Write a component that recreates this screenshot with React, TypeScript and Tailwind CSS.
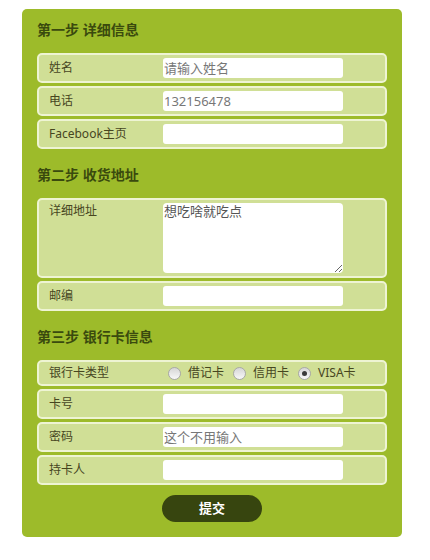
import React from 'react';

const font = { fontFamily: '"Noto Sans", "Noto Sans CJK SC", sans-serif' };

function Row({ label, children, top = false }: { label: string; children: React.ReactNode; top?: boolean }) {
  return (
    <div
      className={`flex ${top ? 'items-start' : 'items-center'} rounded-[5px] border-2 border-[#eef4d3] bg-[#d0df96] py-[3px] pl-[10px]`}
    >
      <span className="w-[114px] shrink-0 text-[12px] leading-4 text-[#47461f]">{label}</span>
      {children}
    </div>
  );
}

function TextInput({ placeholder }: { placeholder?: string }) {
  return (
    <input
      type="text"
      placeholder={placeholder}
      className="h-5 w-[180px] rounded-[3px] bg-white px-px text-[13px] text-[#555] outline-none placeholder:text-[#777]"
      style={font}
    />
  );
}

function Radio({ label, checked = false }: { label: string; checked?: boolean }) {
  return (
    <label className="flex items-center text-[12px] leading-4 text-[#47461f]">
      <span className="ml-[5px] mr-[3px] flex h-[13px] w-[13px] items-center justify-center rounded-full border border-[#a8a8a8] bg-gradient-to-b from-[#d6d6d6] to-[#f8f8f8]">
        {checked && <span className="h-[5px] w-[5px] rounded-full bg-[#3a3a3a]" />}
      </span>
      <span className="ml-1 mr-1">{label}</span>
    </label>
  );
}

function Heading({ children, first = false }: { children: React.ReactNode; first?: boolean }) {
  return (
    <h2 className={`${first ? '' : 'mt-4'} mb-[13px] h-5 text-[14px] font-bold leading-5 text-[#3a4a0e]`}>
      {children}
    </h2>
  );
}

export default function App() {
  return (
    <div className="min-h-[560px] bg-white pt-[9px]" style={font}>
      <form className="ml-[22px] w-[380px] rounded-[5px] bg-[#9dbb2a] px-[15px] pt-[11px] pb-[15px]">
        <Heading first>第一步 详细信息</Heading>
        <div className="flex flex-col gap-[3px]">
          <Row label="姓名">
            <TextInput placeholder="请输入姓名" />
          </Row>
          <Row label="电话">
            <TextInput placeholder="132156478" />
          </Row>
          <Row label="Facebook主页">
            <TextInput />
          </Row>
        </div>

        <Heading>第二步 收货地址</Heading>
        <div className="flex flex-col gap-[3px]">
          <Row label="详细地址" top>
            <textarea
              defaultValue="想吃啥就吃点"
              className="block h-[70px] w-[180px] rounded-[4px] bg-white px-px text-[13px] leading-4 text-[#555] outline-none"
              style={font}
            />
          </Row>
          <Row label="邮编">
            <TextInput />
          </Row>
        </div>

        <Heading>第三步 银行卡信息</Heading>
        <div className="flex flex-col gap-[3px]">
          <Row label="银行卡类型">
            <div className="flex items-center">
              <Radio label="借记卡" />
              <Radio label="信用卡" />
              <Radio label="VISA卡" checked />
            </div>
          </Row>
          <Row label="卡号">
            <TextInput />
          </Row>
          <Row label="密码">
            <TextInput placeholder="这个不用输入" />
          </Row>
          <Row label="持卡人">
            <TextInput />
          </Row>
        </div>

        <div className="mt-[10px] flex justify-center">
          <button
            type="button"
            className="h-[27px] w-[100px] rounded-full bg-[#37450f] text-[13px] font-bold text-white"
            style={font}
          >
            提交
          </button>
        </div>
      </form>
    </div>
  );
}
